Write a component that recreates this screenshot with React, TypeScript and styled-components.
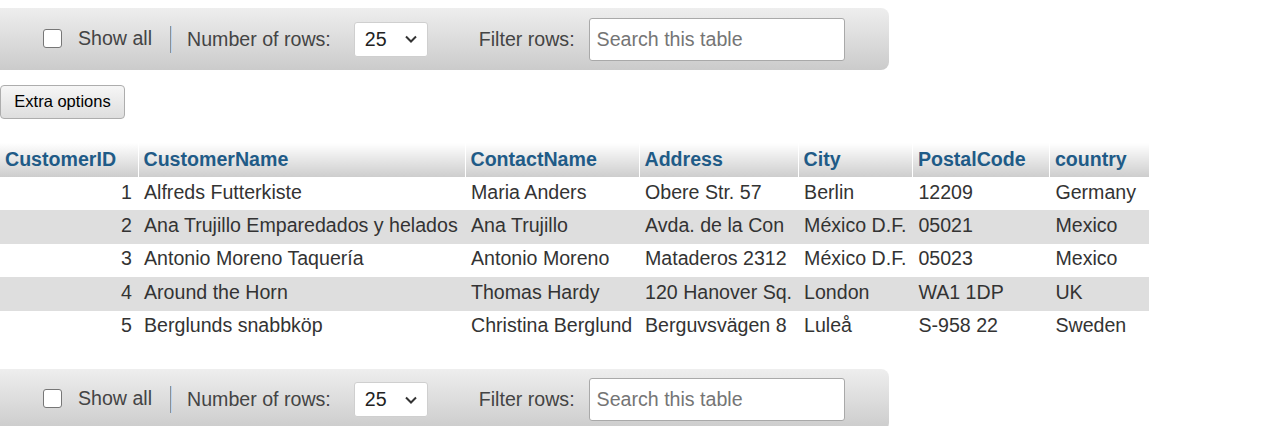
import React from 'react';
import styled, { createGlobalStyle } from 'styled-components';

const GlobalStyle = createGlobalStyle`
  html, body {
    margin: 0;
    padding: 0;
    background: #fff;
  }
  body {
    font-family: "Liberation Sans", Arial, sans-serif;
    color: #333;
  }
`;

const Page = styled.div`
  padding-top: 8px;
  display: flex;
  flex-direction: column;
  align-items: flex-start;
`;

const Toolbar = styled.div`
  width: 889px;
  height: 62px;
  box-sizing: border-box;
  padding-left: 43px;
  display: flex;
  align-items: center;
  background: linear-gradient(to bottom, #eeeeee, #cbcbcb);
  border-radius: 0 8px 8px 0;
  color: #444;
  font-size: 19.6px;
`;

const CheckLabel = styled.label`
  display: flex;
  align-items: center;
  gap: 16px;
  margin-top: -2px;
`;

const Check = styled.input`
  appearance: none;
  margin: 0;
  width: 19px;
  height: 19px;
  box-sizing: border-box;
  border: 1px solid #767676;
  border-radius: 3px;
  background: #fff;
`;

const Separator = styled.span`
  width: 1px;
  height: 27px;
  margin: 0 16px 0 18px;
  background: #8a8f96;
  box-shadow: 1px 0 0 #b9d3ee;
`;

const Label = styled.span`
  white-space: nowrap;
`;

const Select = styled.div`
  margin-left: 23px;
  width: 74px;
  height: 35px;
  box-sizing: border-box;
  border: 1px solid #cfcfcf;
  border-radius: 3px;
  background: #fff;
  color: #222;
  display: flex;
  align-items: center;
  justify-content: space-between;
  padding: 0 9px 0 10px;
  font-size: 19.6px;
`;

const FilterLabel = styled(Label)`
  margin-left: 51px;
`;

const Search = styled.input`
  margin-left: 14px;
  width: 256px;
  height: 43px;
  box-sizing: border-box;
  border: 1px solid #a9a9a9;
  border-radius: 3px;
  padding: 0 7px;
  font-family: "Liberation Sans", Arial, sans-serif;
  font-size: 19.6px;
  color: #222;
  background: #fff;
  outline: none;

  &::placeholder {
    color: #757575;
  }
`;

const OptionsButton = styled.button`
  margin-top: 15px;
  height: 34px;
  width: 125px;
  box-sizing: border-box;
  border: 1px solid #adadad;
  border-radius: 4px;
  background: linear-gradient(to bottom, #f6f6f6, #dedede);
  font-family: "Liberation Sans", Arial, sans-serif;
  font-size: 16.5px;
  color: #000;
  padding: 0 0 2px;
`;

const Table = styled.table`
  margin-top: 24px;
  margin-bottom: 25px;
  border-collapse: collapse;
  table-layout: fixed;
  font-size: 19.6px;
`;

const HeadCell = styled.th<{ $w: number }>`
  width: ${(p) => p.$w}px;
  height: 34px;
  box-sizing: border-box;
  padding: 0 5px 2px;
  text-align: left;
  font-weight: bold;
  color: #1f5b87;
  background: linear-gradient(to bottom, #ffffff, #cdcdcd);
  border-left: 1px solid #fff;
  white-space: nowrap;
  overflow: hidden;

  &:first-child {
    border-left: none;
  }
`;

const Row = styled.tr<{ $alt: boolean }>`
  background: ${(p) => (p.$alt ? '#dedede' : '#fff')};
`;

const Cell = styled.td<{ $num?: boolean }>`
  height: 33.4px;
  box-sizing: border-box;
  padding: 0 6px 3px;
  white-space: nowrap;
  overflow: hidden;
  color: #333;
  text-align: ${(p) => (p.$num ? 'right' : 'left')};
`;

const Chevron = () => (
  <svg width="14" height="10" viewBox="0 0 14 10">
    <path d="M2 2.5 L7 7.5 L12 2.5" fill="none" stroke="#333" strokeWidth="2" />
  </svg>
);

const columns: [string, number][] = [
  ['CustomerID', 138],
  ['CustomerName', 327],
  ['ContactName', 174],
  ['Address', 159],
  ['City', 114],
  ['PostalCode', 137],
  ['country', 100],
];

const rows = [
  ['1', 'Alfreds Futterkiste', 'Maria Anders', 'Obere Str. 57', 'Berlin', '12209', 'Germany'],
  ['2', 'Ana Trujillo Emparedados y helados', 'Ana Trujillo', 'Avda. de la Con', 'México D.F.', '05021', 'Mexico'],
  ['3', 'Antonio Moreno Taquería', 'Antonio Moreno', 'Mataderos 2312', 'México D.F.', '05023', 'Mexico'],
  ['4', 'Around the Horn', 'Thomas Hardy', '120 Hanover Sq.', 'London', 'WA1 1DP', 'UK'],
  ['5', 'Berglunds snabbköp', 'Christina Berglund', 'Berguvsvägen 8', 'Luleå', 'S-958 22', 'Sweden'],
];

const Controls = () => (
  <Toolbar>
    <CheckLabel>
      <Check type="checkbox" />
      <Label>Show all</Label>
    </CheckLabel>
    <Separator />
    <Label>Number of rows:</Label>
    <Select>
      <span>25</span>
      <Chevron />
    </Select>
    <FilterLabel>Filter rows:</FilterLabel>
    <Search placeholder="Search this table" />
  </Toolbar>
);

export default function App() {
  return (
    <Page>
      <GlobalStyle />
      <Controls />
      <OptionsButton>Extra options</OptionsButton>
      <Table>
        <thead>
          <tr>
            {columns.map(([name, w]) => (
              <HeadCell key={name} $w={w}>
                {name}
              </HeadCell>
            ))}
          </tr>
        </thead>
        <tbody>
          {rows.map((r, i) => (
            <Row key={r[0]} $alt={i % 2 === 1}>
              {r.map((v, j) => (
                <Cell key={j} $num={j === 0}>
                  {v}
                </Cell>
              ))}
            </Row>
          ))}
        </tbody>
      </Table>
      <Controls />
    </Page>
  );
}
